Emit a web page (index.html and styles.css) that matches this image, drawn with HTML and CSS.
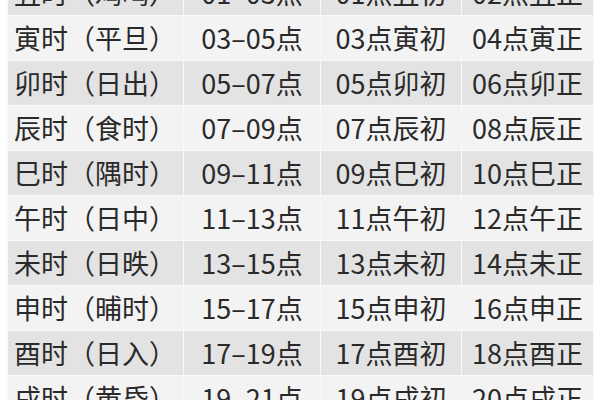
FILE: index.html
```html
<!DOCTYPE html>
<html lang="zh">
<head>
<meta charset="utf-8">
<link rel="stylesheet" href="styles.css">
</head>
<body>
<div class="page">
<table class="hours">
<colgroup><col class="c1"><col class="c2"><col class="c3"><col class="c4"></colgroup>
<tbody>
<tr class="dark"><td class="name">丑时（鸡鸣）</td><td>01–03点</td><td>01点丑初</td><td>02点丑正</td></tr>
<tr class="light"><td class="name">寅时（平旦）</td><td>03–05点</td><td>03点寅初</td><td>04点寅正</td></tr>
<tr class="dark"><td class="name">卯时（日出）</td><td>05–07点</td><td>05点卯初</td><td>06点卯正</td></tr>
<tr class="light"><td class="name">辰时（食时）</td><td>07–09点</td><td>07点辰初</td><td>08点辰正</td></tr>
<tr class="dark"><td class="name">巳时（隅时）</td><td>09–11点</td><td>09点巳初</td><td>10点巳正</td></tr>
<tr class="light"><td class="name">午时（日中）</td><td>11–13点</td><td>11点午初</td><td>12点午正</td></tr>
<tr class="dark"><td class="name">未时（日昳）</td><td>13–15点</td><td>13点未初</td><td>14点未正</td></tr>
<tr class="light"><td class="name">申时（晡时）</td><td>15–17点</td><td>15点申初</td><td>16点申正</td></tr>
<tr class="dark"><td class="name">酉时（日入）</td><td>17–19点</td><td>17点酉初</td><td>18点酉正</td></tr>
<tr class="light"><td class="name">戌时（黄昏）</td><td>19–21点</td><td>19点戌初</td><td>20点戌正</td></tr>
</tbody>
</table>
</div>
</body>
</html>
```
FILE: styles.css
```css
html, body {
  margin: 0;
  padding: 0;
  background: #ffffff;
  width: 600px;
  height: 400px;
  overflow: hidden;
}
.page {
  padding-left: 7px;
}
.hours {
  margin-top: -30px;
  border-collapse: collapse;
  table-layout: fixed;
  width: 586px;
  font-family: "Noto Sans CJK SC", "Noto Sans", sans-serif;
  font-size: 27px;
  color: #2a2a2a;
}
.c1 { width: 176px; }
.c2 { width: 137px; }
.c3 { width: 141px; }
.c4 { width: 132px; }
.hours td {
  height: 45px;
  padding: 0 0 2px 0;
  box-sizing: border-box;
  border: 1px solid #f9f9f9;
  text-align: center;
  white-space: nowrap;
  line-height: 1;
}
.hours td.name {
  text-align: left;
  padding-left: 6px;
}
.dark td { background: #e3e3e3; }
.light td { background: #f3f3f3; }
```
